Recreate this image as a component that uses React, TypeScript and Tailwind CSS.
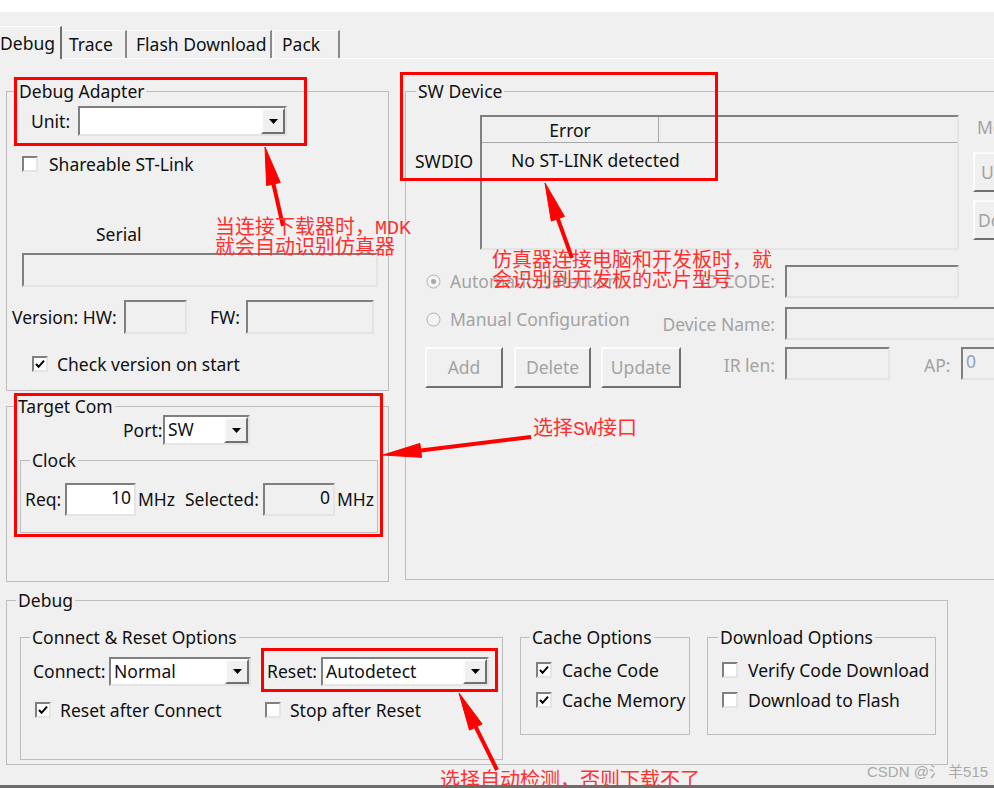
import React from 'react';

const sunken = 'border-2 border-t-[#7f7f7f] border-l-[#7f7f7f] border-b-[#e4e4e4] border-r-[#e4e4e4]';
const raised = 'border-2 border-t-[#fcfcfc] border-l-[#fcfcfc] border-b-[#707070] border-r-[#707070]';
const cjk = "font-['Liberation_Mono','Noto_Sans_CJK_SC',monospace]";

function Group({ title, className = '', legend = 'ml-[10px]', children }: { title: string; className?: string; legend?: string; children?: React.ReactNode }) {
    return (
        <fieldset className={`m-0 min-w-0 shrink-0 border border-[#bdbdbd] p-0 ${className}`}>
            <legend className={`px-[2px] leading-[20px] ${legend}`}>{title}</legend>
            {children}
        </fieldset>
    );
}

function Combo({ value = '', className = '' }: { value?: string; className?: string }) {
    return (
        <div className={`flex shrink-0 bg-white ${sunken} ${className}`}>
            <span className="flex-1 overflow-hidden pl-[3px] leading-[25px]">{value}</span>
            <span className={`flex w-[24px] items-center justify-center bg-[#f0f0f0] ${raised}`}>
                <svg width="9" height="5" viewBox="0 0 9 5">
                    <path d="M0 0h9L4.5 5z" fill="#000" />
                </svg>
            </span>
        </div>
    );
}

function Check({ checked = false }: { checked?: boolean }) {
    return (
        <span className={`flex h-[16px] w-[16px] shrink-0 items-center justify-center bg-white ${sunken}`}>
            {checked && (
                <svg width="10" height="10" viewBox="0 0 10 10">
                    <path d="M1 5l2.6 2.8L9 1.6" stroke="#000" strokeWidth="2" fill="none" />
                </svg>
            )}
        </span>
    );
}

function Radio({ on = false }: { on?: boolean }) {
    return (
        <svg width="15" height="15" viewBox="0 0 15 15" className="shrink-0">
            <circle cx="7.5" cy="7.5" r="6.5" fill="#f4f4f4" stroke="#b4b4b4" />
            {on && <circle cx="7.5" cy="7.5" r="2.5" fill="#a8a8a8" />}
        </svg>
    );
}

function Btn({ label, className = '' }: { label: string; className?: string }) {
    return <div className={`flex h-[41px] shrink-0 items-center justify-center bg-[#f0f0f0] text-[#a3a3a3] ${raised} ${className}`}>{label}</div>;
}

function Arrow({ x1, y1, x2, y2 }: { x1: number; y1: number; x2: number; y2: number }) {
    // tail (x1,y1) -> tip (x2,y2)
    const dx = x2 - x1;
    const dy = y2 - y1;
    const len = Math.hypot(dx, dy);
    const ux = dx / len;
    const uy = dy / len;
    const bx = x2 - ux * 38;
    const by = y2 - uy * 38;
    const px = -uy * 7;
    const py = ux * 7;
    return (
        <g fill="#ff0000" stroke="#ff0000">
            <line x1={x1} y1={y1} x2={bx} y2={by} strokeWidth="4" />
            <polygon points={`${x2},${y2} ${bx + px},${by + py} ${bx - px},${by - py}`} strokeWidth="1" />
        </g>
    );
}

export default function App() {
    return (
        <div className="relative flex h-[788px] w-[994px] flex-col overflow-hidden whitespace-nowrap bg-[#f0f0f0] font-['Noto_Sans',sans-serif] text-[17.5px] text-[#111]">
            <div className="h-[12px] shrink-0 bg-white" />

            {/* tabs */}
            <div className="flex h-[47px] shrink-0 items-end border-b border-[#fbfbfb]">
                <div className="-mb-px -ml-px flex h-[33px] w-[63px] items-center border-t border-l border-[#fbfbfb] border-r-2 border-r-[#707070] bg-[#f0f0f0]">Debug</div>
                <div className="flex h-[28px] w-[65px] items-center border-t border-[#fbfbfb] border-r-2 border-r-[#8a8a8a] pl-[7px]">Trace</div>
                <div className="flex h-[28px] w-[145px] items-center border-t border-[#fbfbfb] border-r-2 border-r-[#8a8a8a] pl-[9px]">Flash Download</div>
                <div className="ml-px flex h-[28px] w-[67px] items-center border-t border-l border-[#fbfbfb] border-r-2 border-r-[#8a8a8a] pl-[8px]">Pack</div>
            </div>

            <div className="flex shrink-0 gap-[16px] pl-[6px] pt-[22px]">
                {/* left column */}
                <div className="flex w-[383px] shrink-0 flex-col">
                    <Group title="Debug Adapter" className="h-[310px]">
                        <div className="mt-[5px] flex h-[30px] items-center pl-[24px]">
                            <span className="w-[47px]">Unit:</span>
                            <Combo className="h-[30px] w-[209px]" />
                        </div>
                        <div className="mt-[18px] flex h-[20px] items-center gap-[11px] pl-[15px]">
                            <Check />
                            <span>Shareable ST-Link</span>
                        </div>
                        <div className="mt-[50px] pl-[89px] leading-[20px]">Serial</div>
                        <div className={`ml-[15px] mt-[9px] h-[34px] w-[356px] ${sunken}`} />
                        <div className="mt-[13px] flex h-[34px] items-center pl-[5px]">
                            <span className="w-[112px] shrink-0">Version: HW:</span>
                            <div className={`h-[34px] w-[63px] shrink-0 ${sunken}`} />
                            <span className="ml-[23px] w-[36px] shrink-0">FW:</span>
                            <div className={`h-[34px] w-[128px] shrink-0 ${sunken}`} />
                        </div>
                        <div className="mt-[20px] flex h-[20px] items-center gap-[9px] pl-[25px]">
                            <Check checked />
                            <span>Check version on start</span>
                        </div>
                    </Group>

                    <Group title="Target Com" className="mt-[5px] h-[186px]" legend="ml-[9px]">
                        <div className="-mt-px flex h-[30px] items-center pl-[116px]">
                            <span className="w-[40px]">Port:</span>
                            <Combo value="SW" className="h-[30px] w-[87px]" />
                        </div>
                        <Group title="Clock" className="ml-[13px] mt-[5px] h-[83px] w-[358px]" legend="ml-[9px]">
                            <div className="mt-[13px] flex h-[33px] items-center pl-[4px]">
                                <span className="w-[40px] shrink-0">Req:</span>
                                <div className={`flex h-[33px] w-[71px] shrink-0 items-start justify-end bg-white pr-[3px] leading-[24px] ${sunken}`}>10</div>
                                <span className="w-[49px] shrink-0 pl-[2px]">MHz</span>
                                <span className="w-[78px] shrink-0">Selected:</span>
                                <div className={`flex h-[33px] w-[72px] shrink-0 items-start justify-end pr-[3px] leading-[24px] ${sunken}`}>0</div>
                                <span className="pl-[2px]">MHz</span>
                            </div>
                        </Group>
                    </Group>
                </div>

                {/* right column */}
                <Group title="SW Device" className="h-[499px] w-[620px]">
                    <div className="mt-[14px] flex">
                        <div className="w-[74px] shrink-0 pl-[9px] pt-[36px] leading-[20px]">SWDIO</div>
                        <div className={`relative h-[135px] w-[479px] shrink-0 ${sunken}`}>
                            <div className="flex h-[26px] border-b border-[#a8a8a8]">
                                <div className="w-[177px] border-r border-[#a8a8a8] text-center leading-[26px]">Error</div>
                                <div className="w-[2px] border-r border-[#e8e8e8]" />
                            </div>
                            <div className="pl-[29px] leading-[34px]">No ST-LINK detected</div>
                        </div>
                        <div className="ml-[14px] flex shrink-0 flex-col text-[#a3a3a3]">
                            <span className="mt-[2px] pl-[4px] leading-[20px]">Move</span>
                            <div className={`mt-[15px] flex h-[40px] w-[60px] items-center pl-[6px] ${raised}`}>Up</div>
                            <div className={`mt-[8px] flex h-[40px] w-[60px] items-center pl-[3px] ${raised}`}>Down</div>
                        </div>
                    </div>

                    <div className="mt-[15px] flex h-[33px] items-stretch text-[#a3a3a3]">
                        <div className="flex w-[369px] shrink-0 items-center justify-between pl-[20px]">
                            <span className="flex items-center gap-[9px]">
                                <Radio on />
                                <span>Automatic Detection</span>
                            </span>
                            <span>ID CODE:</span>
                        </div>
                        <div className={`ml-[10px] w-[174px] shrink-0 ${sunken}`} />
                    </div>

                    <div className="mt-[9px] flex h-[33px] items-stretch text-[#a3a3a3]">
                        <div className="flex w-[369px] shrink-0 justify-between pl-[20px]">
                            <span className="mt-[2px] flex h-[20px] items-center gap-[9px]">
                                <Radio />
                                <span>Manual Configuration</span>
                            </span>
                            <span className="mt-[7px] leading-[20px]">Device Name:</span>
                        </div>
                        <div className={`ml-[10px] w-[230px] shrink-0 ${sunken}`} />
                    </div>

                    <div className="mt-[7px] flex items-start text-[#a3a3a3]">
                        <div className="flex w-[369px] shrink-0 items-start pl-[19px]">
                            <Btn label="Add" className="w-[78px]" />
                            <Btn label="Delete" className="ml-[11px] w-[77px]" />
                            <Btn label="Update" className="ml-[10px] w-[80px]" />
                            <span className="ml-auto leading-[36px]">IR len:</span>
                        </div>
                        <div className={`ml-[10px] h-[33px] w-[105px] shrink-0 ${sunken}`} />
                        <span className="ml-[34px] w-[37px] shrink-0 leading-[36px]">AP:</span>
                        <div className={`h-[33px] w-[60px] shrink-0 pl-[3px] leading-[24px] text-[#8fa2c0] ${sunken}`}>0</div>
                    </div>
                </Group>
            </div>

            {/* Debug group */}
            <Group title="Debug" className="ml-[6px] mt-[8px] h-[175px] w-[942px]" legend="ml-[9px]">
                <div className="flex items-start">
                    <Group title="Connect & Reset Options" className="ml-[13px] mt-[17px] h-[133px] w-[483px]" legend="ml-[9px]">
                        <div className="mt-[10px] flex h-[29px] items-center pl-[12px]">
                            <span className="w-[76px] shrink-0">Connect:</span>
                            <Combo value="Normal" className="h-[29px] w-[142px]" />
                            <span className="ml-[16px] w-[54px] shrink-0">Reset:</span>
                            <Combo value="Autodetect" className="h-[29px] w-[168px]" />
                        </div>
                        <div className="mt-[14px] flex h-[20px] items-center pl-[14px]">
                            <span className="flex w-[230px] items-center gap-[9px]">
                                <Check checked />
                                <span>Reset after Connect</span>
                            </span>
                            <span className="flex items-center gap-[9px]">
                                <Check />
                                <span>Stop after Reset</span>
                            </span>
                        </div>
                    </Group>

                    <Group title="Cache Options" className="ml-[17px] mt-[17px] h-[108px] w-[170px]" legend="ml-[9px]">
                        <div className="mt-[13px] flex h-[20px] items-center gap-[10px] pl-[15px]">
                            <Check checked />
                            <span>Cache Code</span>
                        </div>
                        <div className="mt-[10px] flex h-[20px] items-center gap-[10px] pl-[15px]">
                            <Check checked />
                            <span>Cache Memory</span>
                        </div>
                    </Group>

                    <Group title="Download Options" className="ml-[17px] mt-[17px] h-[108px] w-[229px]" legend="ml-[10px]">
                        <div className="mt-[13px] flex h-[20px] w-[222px] items-center gap-[10px] overflow-hidden pl-[14px]">
                            <Check />
                            <span>Verify Code Download</span>
                        </div>
                        <div className="mt-[10px] flex h-[20px] items-center gap-[10px] pl-[14px]">
                            <Check />
                            <span>Download to Flash</span>
                        </div>
                    </Group>
                </div>
            </Group>

            <div className="flex-1" />
            <div className="relative z-20 h-[3px] shrink-0 bg-[#6c6c6c]" />

            {/* annotations */}
            <svg className="pointer-events-none absolute inset-0 z-10" width="994" height="788" viewBox="0 0 994 788">
                <g fill="none" stroke="#ff0000" strokeWidth="3">
                    <rect x="15.5" y="78.5" width="290" height="66" />
                    <rect x="401.5" y="73.5" width="315" height="106" />
                    <rect x="15.5" y="394.5" width="366" height="141" />
                    <rect x="262.5" y="649.5" width="234" height="41" />
                </g>
                <Arrow x1={283} y1={226} x2={265} y2={147} />
                <Arrow x1={572} y1={258} x2={545} y2={183} />
                <Arrow x1={531} y1={437} x2={383} y2={455} />
                <Arrow x1={497} y1={770} x2={459} y2={693} />
            </svg>
            <div className={`absolute left-[215px] top-[219px] z-10 text-[20px] leading-[20px] text-[#ff3030] ${cjk}`}>
                当连接下载器时，MDK
                <br />
                就会自动识别仿真器
            </div>
            <div className={`absolute left-[492px] top-[252px] z-10 text-[20px] leading-[20px] text-[#ff3030] ${cjk}`}>
                仿真器连接电脑和开发板时，就
                <br />
                会识别到开发板的芯片型号
            </div>
            <div className={`absolute left-[533px] top-[420px] z-10 text-[20px] leading-[20px] text-[#ff3030] ${cjk}`}>选择SW接口</div>
            <div className={`absolute left-[440px] top-[772px] z-10 text-[20px] leading-[20px] text-[#ff3030] ${cjk}`}>选择自动检测，否则下载不了</div>
            <div className="absolute left-[867px] top-[763px] z-10 font-['Liberation_Sans','Noto_Sans_CJK_SC',sans-serif] text-[15px] leading-[18px] text-[#a9a9a9]">
                CSDN @氵 羊515
            </div>
        </div>
    );
}
